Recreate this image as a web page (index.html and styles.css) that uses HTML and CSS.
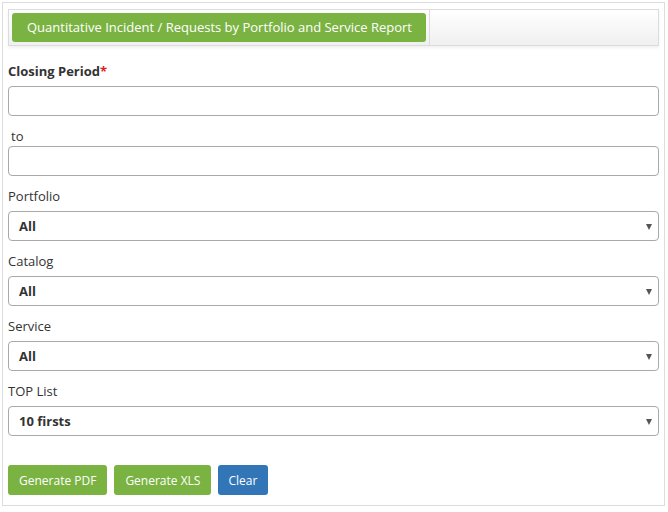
FILE: index.html
```html
<!DOCTYPE html>
<html>
<head>
<meta charset="utf-8">
<link rel="stylesheet" href="styles.css">
</head>
<body>
<div class="panel">
  <div class="tabbar">
    <div class="tab">Quantitative Incident / Requests by Portfolio and Service Report</div>
    <div class="tab-rest"></div>
  </div>
  <form class="form">
    <div class="group">
      <label class="label bold">Closing Period<span class="req">*</span></label>
      <input class="input" type="text">
    </div>
    <div class="group">
      <label class="label indent">to</label>
      <input class="input" type="text">
    </div>
    <div class="group">
      <label class="label">Portfolio</label>
      <div class="select"><span>All</span></div>
    </div>
    <div class="group">
      <label class="label">Catalog</label>
      <div class="select"><span>All</span></div>
    </div>
    <div class="group">
      <label class="label">Service</label>
      <div class="select"><span>All</span></div>
    </div>
    <div class="group">
      <label class="label">TOP List</label>
      <div class="select"><span>10 firsts</span></div>
    </div>
    <div class="actions">
      <button type="button" class="btn green">Generate PDF</button>
      <button type="button" class="btn green">Generate XLS</button>
      <button type="button" class="btn blue">Clear</button>
    </div>
  </form>
</div>
</body>
</html>
```
FILE: styles.css
```css
* { box-sizing: border-box; }
html, body { margin: 0; padding: 0; background: #fff; }
body {
  font-family: "Open Sans", "Noto Sans", sans-serif;
  font-size: 13px;
  color: #333;
}
.panel {
  margin: 2px 3px 0 2px;
  height: 504px;
  border: 1px solid #dcdcdc;
  padding: 6px 5px 0 5px;
}
.tabbar {
  display: flex;
  height: 37px;
  border: 1px solid #dcdcdc;
  background: linear-gradient(#ffffff, #f0f0f0);
  box-shadow: 0 2px 3px rgba(0,0,0,0.06);
  padding: 3px;
}
.tab {
  background: #7ab342;
  color: #fff;
  border-radius: 3px;
  height: 29px;
  line-height: 29px;
  padding: 0 14px 0 15px;
  font-size: 13px;
  white-space: nowrap;
}
.tab-rest {
  flex: 1;
  margin: -3px 0 -3px 3px;
  border-left: 1px solid #dcdcdc;
}
.form {
  padding-top: 15px;
}
.group {
  margin-bottom: 10px;
}
.label {
  display: block;
  height: 20px;
  line-height: 20px;
  margin-bottom: 5px;
}
.bold { font-weight: 700; }
.indent { padding-left: 3px; margin-bottom: 0; }
.req { color: #e21b1b; }
.input {
  display: block;
  width: 100%;
  height: 30px;
  border: 1px solid #a9a9a9;
  border-radius: 4px;
  background: #fff;
  font: inherit;
  margin: 0;
}
.select {
  position: relative;
  height: 30px;
  border: 1px solid #a9a9a9;
  border-radius: 4px;
  background: #fff;
  font-weight: 700;
  line-height: 28px;
  padding-left: 10px;
}
.select::after {
  content: "";
  position: absolute;
  right: 6px;
  top: 12px;
  border-left: 3px solid transparent;
  border-right: 3px solid transparent;
  border-top: 6px solid #555;
}
.actions {
  display: flex;
  gap: 7px;
  padding-top: 19px;
}
.btn {
  height: 30px;
  border: none;
  border-radius: 3px;
  color: #fff;
  font-family: inherit;
  font-size: 12px;
  padding: 0 11px;
  margin: 0;
}
.btn.blue { padding: 0 11px 0 10px; }
.green { background: #7ab342; }
.blue { background: #3276b8; }
```
